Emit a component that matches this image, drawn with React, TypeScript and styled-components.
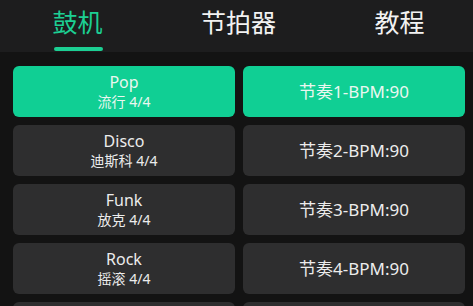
import React from "react";
import styled, { createGlobalStyle } from "styled-components";

const Global = createGlobalStyle`
  html, body { margin: 0; padding: 0; background: #131313; overflow: hidden; }
  body { font-family: "Noto Sans", "Noto Sans CJK SC", sans-serif; }
`;

const Page = styled.div`
  width: 473px;
  height: 306px;
  background: #131313;
  overflow: hidden;
`;

const TabBar = styled.div`
  height: 52px;
  background: #1d1d1e;
  display: grid;
  grid-template-columns: repeat(3, 161px);
  margin-left: -3px;
`;

const Tab = styled.div<{ $active?: boolean }>`
  position: relative;
  display: flex;
  justify-content: center;
  padding-top: 5px;
  font-size: 25px;
  line-height: 34px;
  color: ${(p) => (p.$active ? "#1ccf93" : "#f2f2f2")};
`;

const Underline = styled.div`
  position: absolute;
  left: 50%;
  top: 47px;
  width: 49px;
  height: 4px;
  margin-left: -24px;
  border-radius: 2px;
  background: #1ccf93;
`;

const Grid = styled.div`
  display: grid;
  grid-template-columns: 222px 222px;
  column-gap: 8px;
  row-gap: 8px;
  padding: 14px 8px 0 13px;
`;

const Card = styled.div<{ $active?: boolean }>`
  height: 51px;
  border-radius: 6px;
  background: ${(p) => (p.$active ? "#10cf94" : "#2e2e2f")};
  color: ${(p) => (p.$active ? "#eaf7f0" : "#ececec")};
  display: flex;
  flex-direction: column;
  align-items: center;
  justify-content: center;
`;

const Title = styled.div`
  font-size: 16px;
  line-height: 20px;
`;

const Sub = styled.div`
  font-size: 14px;
  line-height: 19px;
`;

const Rhythm = styled.div`
  font-size: 17px;
  line-height: 22px;
`;

const styles = [
  { name: "Pop", sub: "流行 4/4" },
  { name: "Disco", sub: "迪斯科 4/4" },
  { name: "Funk", sub: "放克 4/4" },
  { name: "Rock", sub: "摇滚 4/4" },
  { name: "Jazz", sub: "爵士 4/4" },
];

export default function App() {
  return (
    <Page>
      <Global />
      <TabBar>
        <Tab $active>
          鼓机
          <Underline />
        </Tab>
        <Tab>节拍器</Tab>
        <Tab>教程</Tab>
      </TabBar>
      <Grid>
        {styles.map((s, i) => (
          <React.Fragment key={s.name}>
            <Card $active={i === 0}>
              <Title>{s.name}</Title>
              <Sub>{s.sub}</Sub>
            </Card>
            <Card $active={i === 0}>
              <Rhythm>节奏{i + 1}-BPM:90</Rhythm>
            </Card>
          </React.Fragment>
        ))}
      </Grid>
    </Page>
  );
}
